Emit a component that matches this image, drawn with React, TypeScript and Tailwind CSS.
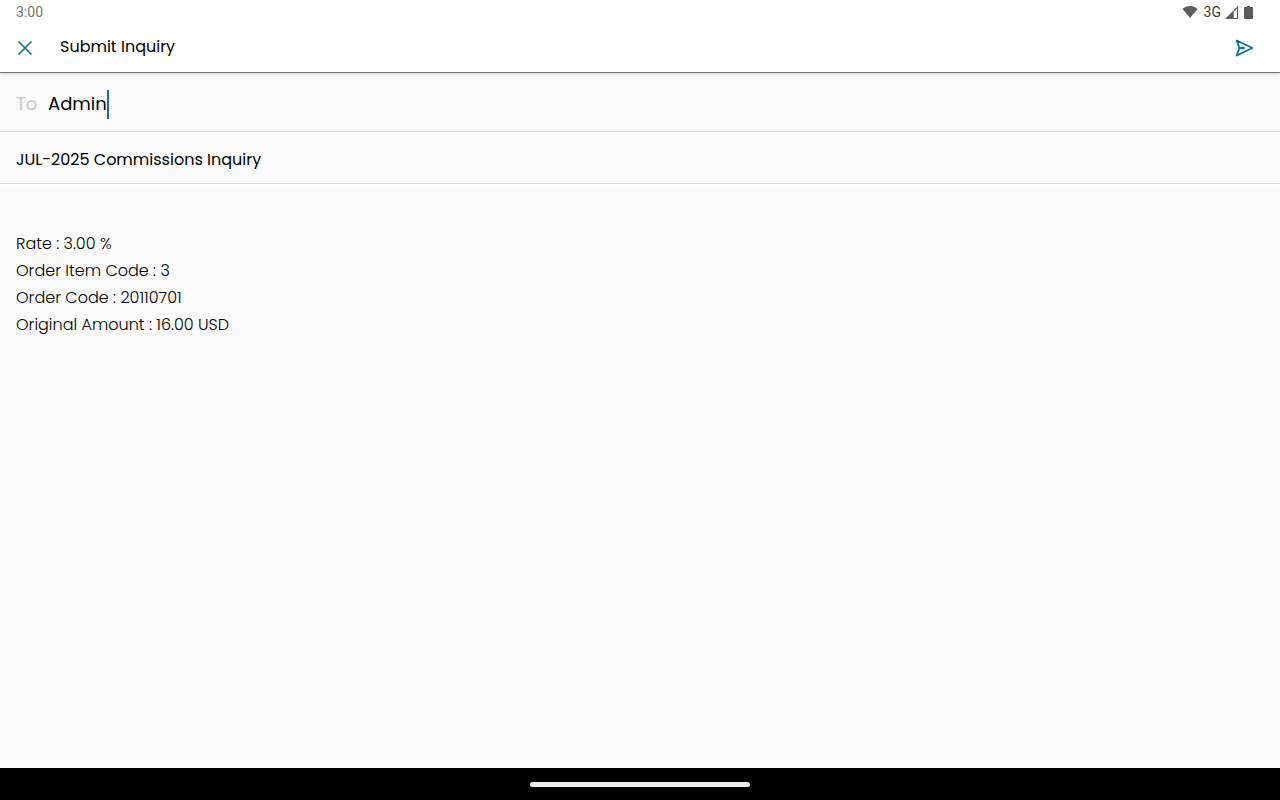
import { useState } from "react";

function StatusBar() {
  return (
    <div className="relative z-20 flex h-6 items-center justify-between bg-white pr-[27px] pl-4 font-['Roboto',sans-serif] text-sm">
      <span className="text-[#757575]">3:00</span>
      <div className="flex items-center gap-1 text-[#3c3c3c]">
        <svg className="mr-0.5 h-3 w-4" viewBox="0 0 16 12" fill="#5c5c5c" aria-hidden="true">
          <path d="M8 12 0.5 3C2.5 1.2 5 0 8 0s5.500 1.200 7.500 3z" />
        </svg>
        <span>3G</span>
        <svg className="mr-0.5 h-[13px] w-[13px]" viewBox="0 0 12 12" fill="#5c5c5c" aria-hidden="true">
          <path d="M0 12 8 4v8z" />
          <path d="M8 4l4-4v12H8v-1h3V2.500l-3 3z" />
        </svg>
        <svg className="h-[13px] w-[9px]" viewBox="0 0 9 13" fill="#5c5c5c" aria-hidden="true">
          <path d="M3 0h3v1h2q1 0 1 1v10q0 1-1 1H1q-1 0-1-1V2q0-1 1-1h2z" />
        </svg>
      </div>
    </div>
  );
}

export default function App() {
  const [to, setTo] = useState("Admin");
  const [subject, setSubject] = useState("JUL-2025 Commissions Inquiry");
  const [message, setMessage] = useState(
    "Rate : 3.00 %\nOrder Item Code : 3\nOrder Code : 20110701\nOriginal Amount : 16.00 USD"
  );

  return (
    <div className="flex min-h-screen flex-col bg-[#fafafa] font-['Poppins','Inter',sans-serif] text-base text-black">
      <StatusBar />
      <header className="z-10 flex h-[49px] items-center border-b border-[#757575] bg-white pr-6 pl-4 shadow-sm">
        <button type="button" aria-label="Close" className="mr-6 flex h-5 w-5 items-center">
          <svg className="h-[18px] w-[18px]" viewBox="0 0 18 18" fill="none" stroke="#08738c" strokeWidth="1.6" aria-hidden="true">
            <path d="M2.500 2.500l13 13M15.500 2.500l-13 13" />
          </svg>
        </button>
        <h1 className="flex-1 pb-0.5">Submit Inquiry</h1>
        <button type="button" aria-label="Send">
          <svg className="h-6 w-6" viewBox="0 0 24 24" fill="none" stroke="#08738c" strokeWidth="1.8" strokeLinejoin="round" aria-hidden="true">
            <path d="M4.800 4.500 20.300 12 4.800 19.500l2.500-7.500zM7.300 12h5.500" />
          </svg>
        </button>
      </header>

      <main className="flex flex-1 flex-col">
        <div className="flex h-[59px] items-center border-b border-[#dadada] px-4 pt-1">
          <label htmlFor="to" className="w-8 text-lg text-[#c8c8c8]">To</label>
          <input
            id="to"
            value={to}
            onChange={(e) => setTo(e.target.value)}
            className="field-sizing-content text-lg outline-none"
          />
          <span className="h-[29px] w-0.5 bg-[#1a66ad]" />
        </div>
        <div className="flex h-[52px] items-center border-t-4 border-b border-t-[#fdfdfd] border-b-[#dadada] px-4">
          <input
            aria-label="Subject"
            value={subject}
            onChange={(e) => setSubject(e.target.value)}
            className="w-full text-base outline-none"
          />
        </div>
        <textarea
          aria-label="Message"
          value={message}
          onChange={(e) => setMessage(e.target.value)}
          className="w-full flex-1 resize-none border-t-4 border-[#fdfdfd] px-4 pt-[42px] leading-[27px] font-light outline-none"
        />
      </main>

      <footer className="flex h-8 items-center justify-center bg-black">
        <div className="h-[5px] w-[220px] rounded-full bg-[#ececec]" />
      </footer>
    </div>
  );
}
